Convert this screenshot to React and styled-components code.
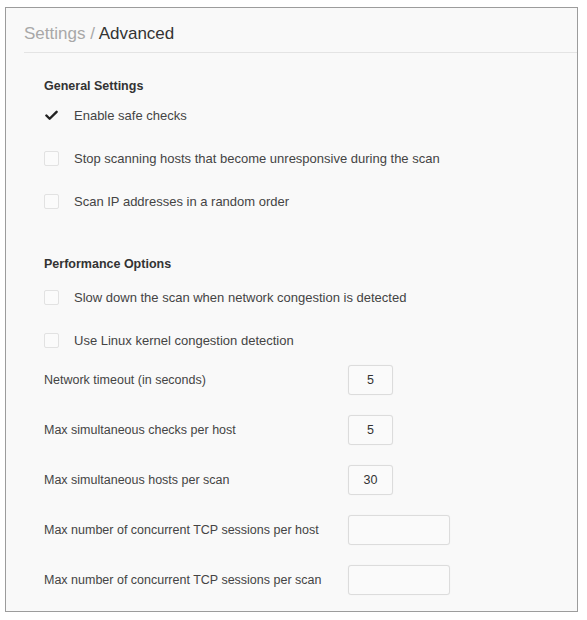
import React from "react";
import styled, { createGlobalStyle } from "styled-components";

const GlobalStyle = createGlobalStyle`
  body {
    margin: 0;
    background: #ffffff;
    font-family: "Liberation Sans", Arial, sans-serif;
  }
`;

const general = [
  { label: "Enable safe checks", checked: true },
  { label: "Stop scanning hosts that become unresponsive during the scan" },
  { label: "Scan IP addresses in a random order" },
];

const performance = [
  { label: "Slow down the scan when network congestion is detected" },
  { label: "Use Linux kernel congestion detection" },
];

const fields = [
  { label: "Network timeout (in seconds)", value: "5" },
  { label: "Max simultaneous checks per host", value: "5" },
  { label: "Max simultaneous hosts per scan", value: "30" },
  { label: "Max number of concurrent TCP sessions per host", value: "", wide: true },
  { label: "Max number of concurrent TCP sessions per scan", value: "", wide: true },
];

const CheckIcon = () => (
  <svg width="14" height="11" viewBox="0 0 14 11">
    <path d="M1.5 5.5 L5 9 L12.5 1.5" fill="none" stroke="#222" strokeWidth="2.6" strokeLinecap="round" strokeLinejoin="round" />
  </svg>
);

const CheckRow = ({ label, checked }) => (
  <Row>
    <Box $checked={checked}>{checked && <CheckIcon />}</Box>
    <span>{label}</span>
  </Row>
);

export default function App() {
  return (
    <>
      <GlobalStyle />
      <Frame>
        <Header>
          <Title>
            <Crumb>Settings /</Crumb> Advanced
          </Title>
        </Header>
        <Body>
          <Heading>General Settings</Heading>
          {general.map((item) => (
            <CheckRow key={item.label} {...item} />
          ))}
          <Heading $gap>Performance Options</Heading>
          {performance.map((item) => (
            <CheckRow key={item.label} {...item} />
          ))}
          <Fields>
            {fields.map((f) => (
              <React.Fragment key={f.label}>
                <FieldLabel>{f.label}</FieldLabel>
                <Input $wide={f.wide} defaultValue={f.value} />
              </React.Fragment>
            ))}
          </Fields>
        </Body>
      </Frame>
    </>
  );
}

const Frame = styled.div`
  margin: 7px 9px 8px 5px;
  height: 605px;
  box-sizing: border-box;
  border: 1px solid #9c9c9c;
  background: #f9f9f9;
`;

const Header = styled.div`
  margin-left: 18px;
  padding: 14px 0 6px 0;
  border-bottom: 1px solid #e4e4e4;
`;

const Title = styled.h1`
  margin: 0;
  font-size: 17px;
  line-height: 24px;
  font-weight: normal;
  color: #333;
`;

const Crumb = styled.span`
  color: #a8a8a8;
`;

const Body = styled.div`
  padding: 25px 0 0 38px;
`;

const Heading = styled.h2`
  margin: ${(p) => (p.$gap ? "33px 0 4px" : "0")};
  font-size: 12.5px;
  line-height: 16px;
  font-weight: bold;
  color: #333;
`;

const Row = styled.div`
  display: flex;
  align-items: center;
  gap: 15px;
  height: 43px;
  font-size: 13px;
  color: #444;
`;

const Box = styled.div`
  width: 15px;
  height: 15px;
  box-sizing: border-box;
  border: 1px solid ${(p) => (p.$checked ? "transparent" : "#e2e2e2")};
  border-radius: 2px;
  background: ${(p) => (p.$checked ? "transparent" : "#fbfbfb")};
  display: flex;
  align-items: center;
  justify-content: center;
`;

const Fields = styled.div`
  display: grid;
  grid-template-columns: 304px auto;
  row-gap: 20px;
  align-items: center;
  justify-items: start;
  margin-top: 3px;
`;

const FieldLabel = styled.div`
  font-size: 12.5px;
  color: #444;
`;

const Input = styled.input`
  width: ${(p) => (p.$wide ? "102px" : "45px")};
  height: 30px;
  box-sizing: border-box;
  border: 1px solid #dcdcdc;
  border-radius: 3px;
  background: #fafafa;
  box-shadow: 0 0 1px rgba(0, 0, 0, 0.08);
  text-align: center;
  font-family: "Liberation Sans", Arial, sans-serif;
  font-size: 12.5px;
  color: #333;
  outline: none;
`;
